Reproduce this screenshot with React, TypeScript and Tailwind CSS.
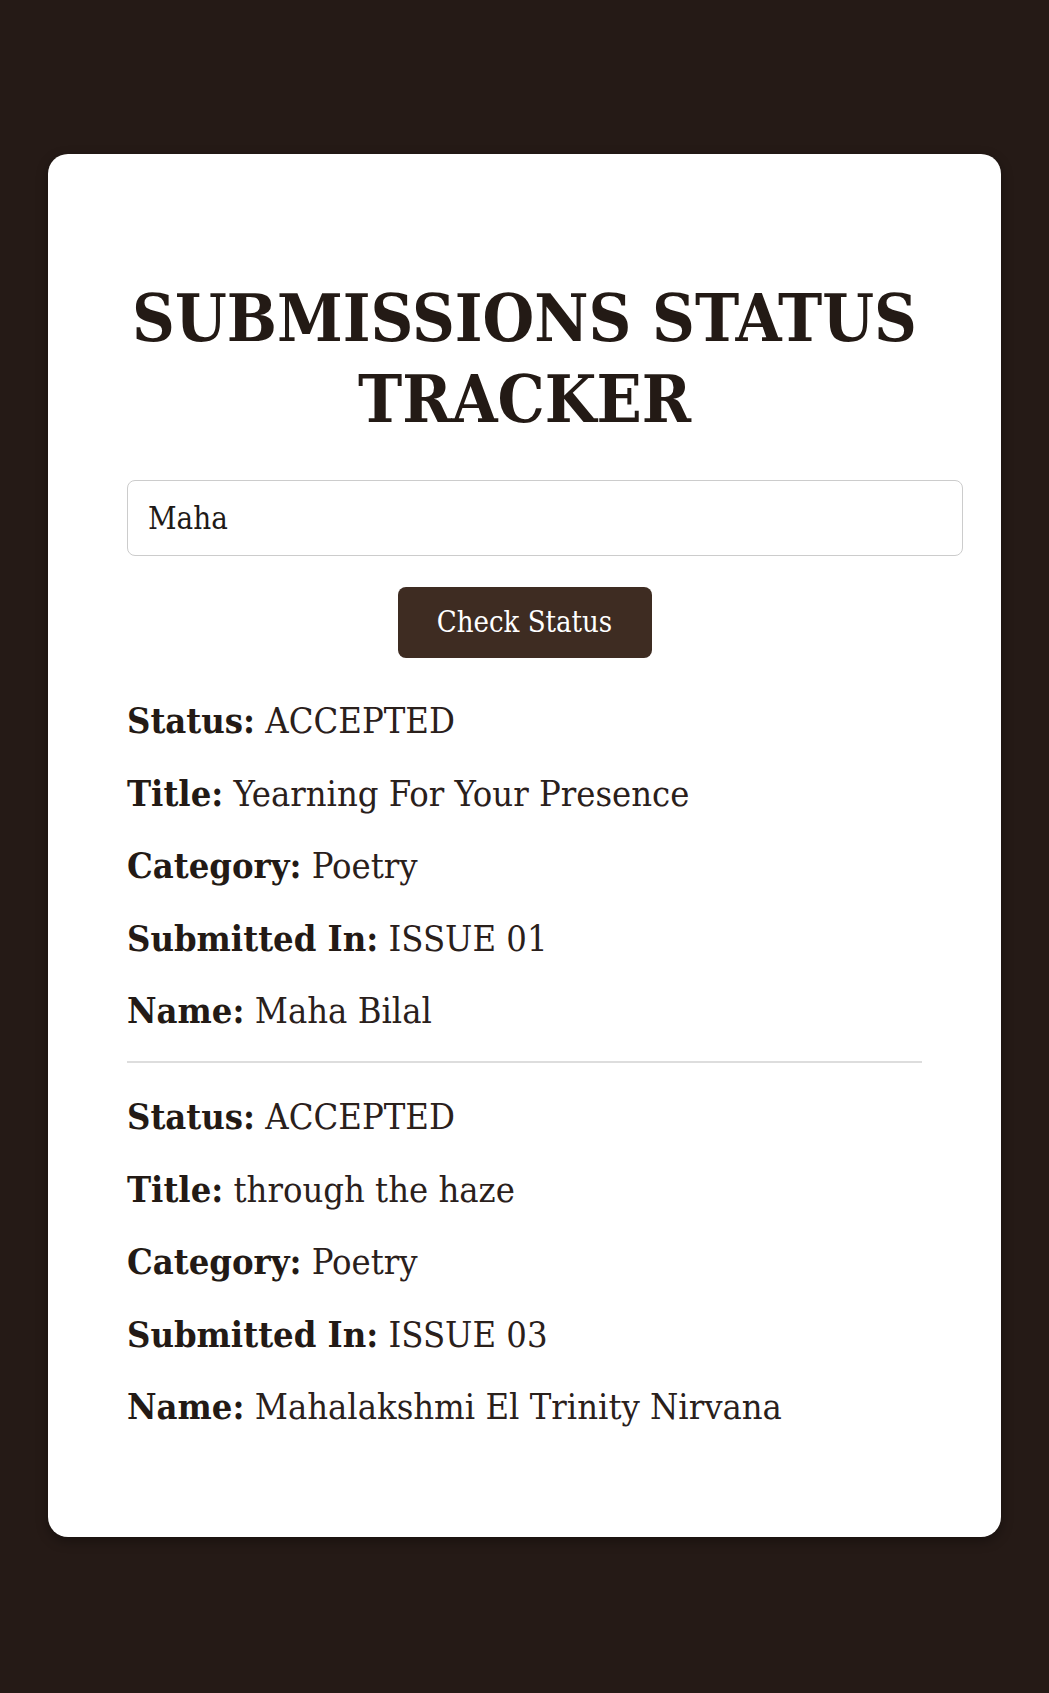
import { useState } from "react";

interface Submission {
  status: string;
  title: string;
  category: string;
  issue: string;
  name: string;
}

const results: Submission[] = [
  {
    status: "ACCEPTED",
    title: "Yearning For Your Presence",
    category: "Poetry",
    issue: "ISSUE 01",
    name: "Maha Bilal",
  },
  {
    status: "ACCEPTED",
    title: "through the haze",
    category: "Poetry",
    issue: "ISSUE 03",
    name: "Mahalakshmi El Trinity Nirvana",
  },
];

function Row({ label, value }: { label: string; value: string }) {
  return (
    <p className="h-[48px] text-[36px] leading-[48px] text-[#2a201b] whitespace-nowrap">
      <strong className="font-bold text-[#231a15]">{label}:</strong> {value}
    </p>
  );
}

export default function App() {
  const [query, setQuery] = useState("Maha");

  return (
    <div
      className="min-h-screen bg-[#251a16] px-[48px] pt-[154px] pb-[155px]"
      style={{ fontFamily: '"DejaVu Serif Condensed", "DejaVu Serif", serif' }}
    >
      <div className="bg-white rounded-[20px] px-[79px] pt-[124px] pb-[107px] shadow-[0_4px_12px_rgba(0,0,0,0.35)]">
        <h1 className="text-center font-bold text-[66px] leading-[81px] text-[#231a15] whitespace-nowrap">
          SUBMISSIONS STATUS
          <br />
          TRACKER
        </h1>

        <input
          type="text"
          value={query}
          onChange={(e) => setQuery(e.target.value)}
          className="mt-[40px] block w-[836px] h-[76px] px-[20px] border-[1.5px] border-[#cccccc] rounded-[8px] text-[31px] text-[#1f1a17] outline-none"
        />

        <div className="flex justify-center mt-[31px]">
          <button className="w-[254px] h-[71px] rounded-[8px] bg-[#3e2c22] text-white text-[29px]">
            Check Status
          </button>
        </div>

        <div className="mt-[38px]">
          {results.map((r, i) => (
            <div key={i}>
              {i > 0 && <hr className="border-0 border-t-2 border-[#dddddd] mt-[27px] mb-[29px]" />}
              <div className="flex flex-col gap-[24.5px]">
                <Row label="Status" value={r.status} />
                <Row label="Title" value={r.title} />
                <Row label="Category" value={r.category} />
                <Row label="Submitted In" value={r.issue} />
                <Row label="Name" value={r.name} />
              </div>
            </div>
          ))}
        </div>
      </div>
    </div>
  );
}
